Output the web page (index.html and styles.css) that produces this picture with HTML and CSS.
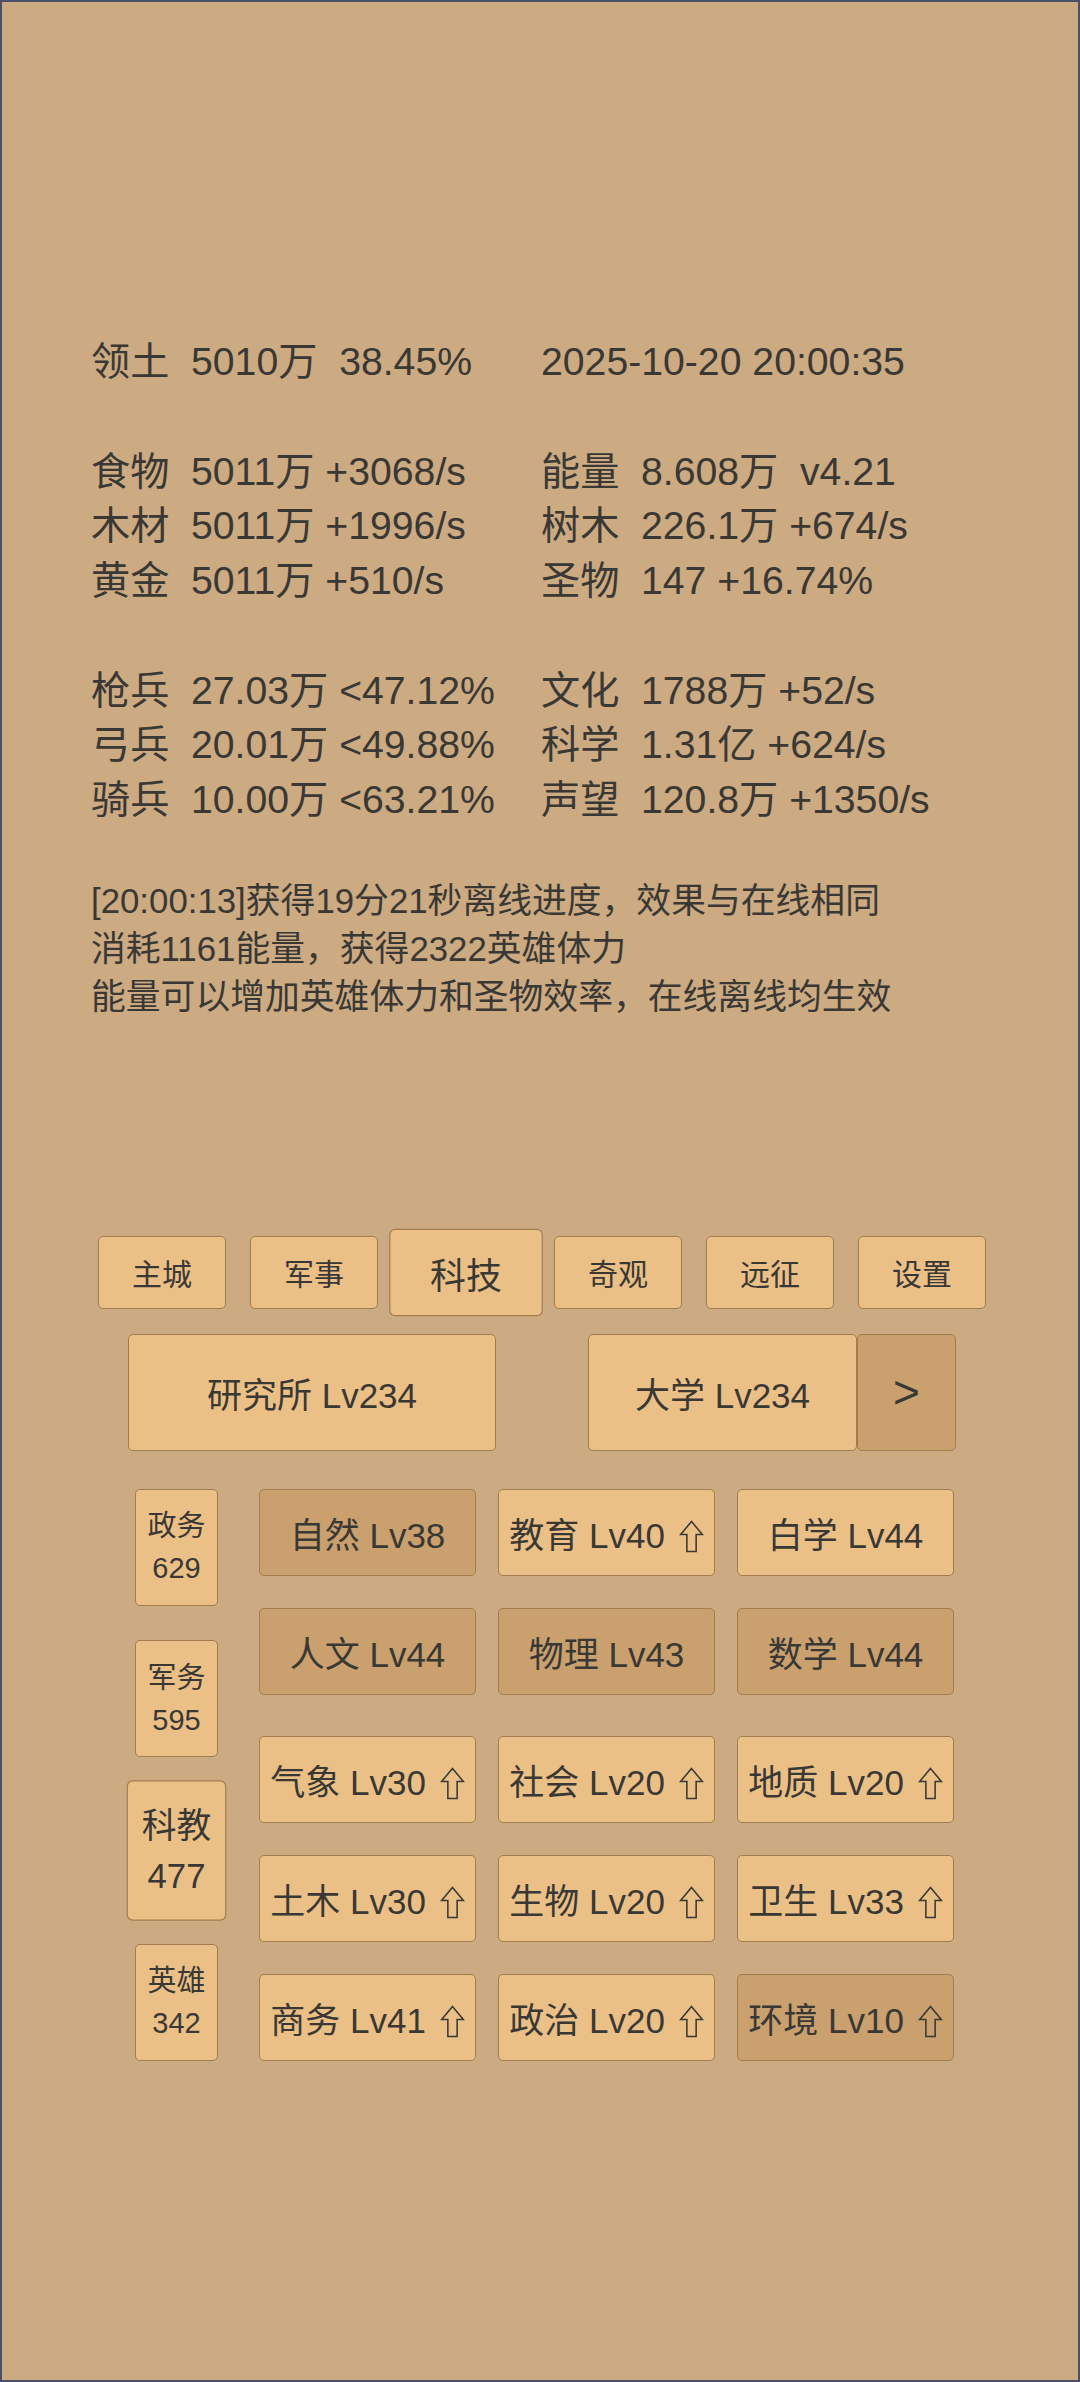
FILE: index.html
```html
<!DOCTYPE html>
<html lang="zh">
<head>
<meta charset="utf-8">
<title>科技</title>
<link rel="stylesheet" href="styles.css">
</head>
<body>
<div class="page">
  <div class="stats">
    <div class="row"><div class="cell"><span class="k">领土</span><span class="v">5010万  38.45%</span></div><div class="cell"><span class="v">2025-10-20 20:00:35</span></div></div>
    <div class="row blank"></div>
    <div class="row"><div class="cell"><span class="k">食物</span><span class="v">5011万 +3068/s</span></div><div class="cell"><span class="k">能量</span><span class="v">8.608万  v4.21</span></div></div>
    <div class="row"><div class="cell"><span class="k">木材</span><span class="v">5011万 +1996/s</span></div><div class="cell"><span class="k">树木</span><span class="v">226.1万 +674/s</span></div></div>
    <div class="row"><div class="cell"><span class="k">黄金</span><span class="v">5011万 +510/s</span></div><div class="cell"><span class="k">圣物</span><span class="v">147 +16.74%</span></div></div>
    <div class="row blank"></div>
    <div class="row"><div class="cell"><span class="k">枪兵</span><span class="v">27.03万 &lt;47.12%</span></div><div class="cell"><span class="k">文化</span><span class="v">1788万 +52/s</span></div></div>
    <div class="row"><div class="cell"><span class="k">弓兵</span><span class="v">20.01万 &lt;49.88%</span></div><div class="cell"><span class="k">科学</span><span class="v">1.31亿 +624/s</span></div></div>
    <div class="row"><div class="cell"><span class="k">骑兵</span><span class="v">10.00万 &lt;63.21%</span></div><div class="cell"><span class="k">声望</span><span class="v">120.8万 +1350/s</span></div></div>
  </div>

  <div class="log">
    <p>[20:00:13]获得19分21秒离线进度，效果与在线相同</p>
    <p>消耗1161能量，获得2322英雄体力</p>
    <p>能量可以增加英雄体力和圣物效率，在线离线均生效</p>
  </div>

  <nav class="tabs">
    <button class="tab">主城</button>
    <button class="tab">军事</button>
    <button class="tab active">科技</button>
    <button class="tab">奇观</button>
    <button class="tab">远征</button>
    <button class="tab">设置</button>
  </nav>

  <div class="buildings">
    <button class="bld wide">研究所 Lv234</button>
    <div class="bld-group">
      <button class="bld uni">大学 Lv234</button>
      <button class="bld next dark">&gt;</button>
    </div>
  </div>

  <div class="tech">
    <div class="side">
      <button class="sbtn">政务<br>629</button>
      <button class="sbtn">军务<br>595</button>
      <button class="sbtn active">科教<br>477</button>
      <button class="sbtn">英雄<br>342</button>
    </div>
    <div class="grid-wrap">
      <div class="grid">
        <button class="cellbtn dark">自然 Lv38</button>
        <button class="cellbtn">教育 Lv40 <svg class="up" viewBox="0 0 24 32"><path d="M12 1.5 L22.5 14 L16.5 14 L16.5 30.5 L7.5 30.5 L7.5 14 L1.5 14 Z"/></svg></button>
        <button class="cellbtn">白学 Lv44</button>
        <button class="cellbtn dark">人文 Lv44</button>
        <button class="cellbtn dark">物理 Lv43</button>
        <button class="cellbtn dark">数学 Lv44</button>
      </div>
      <div class="grid">
        <button class="cellbtn">气象 Lv30 <svg class="up" viewBox="0 0 24 32"><path d="M12 1.5 L22.5 14 L16.5 14 L16.5 30.5 L7.5 30.5 L7.5 14 L1.5 14 Z"/></svg></button>
        <button class="cellbtn">社会 Lv20 <svg class="up" viewBox="0 0 24 32"><path d="M12 1.5 L22.5 14 L16.5 14 L16.5 30.5 L7.5 30.5 L7.5 14 L1.5 14 Z"/></svg></button>
        <button class="cellbtn">地质 Lv20 <svg class="up" viewBox="0 0 24 32"><path d="M12 1.5 L22.5 14 L16.5 14 L16.5 30.5 L7.5 30.5 L7.5 14 L1.5 14 Z"/></svg></button>
        <button class="cellbtn">土木 Lv30 <svg class="up" viewBox="0 0 24 32"><path d="M12 1.5 L22.5 14 L16.5 14 L16.5 30.5 L7.5 30.5 L7.5 14 L1.5 14 Z"/></svg></button>
        <button class="cellbtn">生物 Lv20 <svg class="up" viewBox="0 0 24 32"><path d="M12 1.5 L22.5 14 L16.5 14 L16.5 30.5 L7.5 30.5 L7.5 14 L1.5 14 Z"/></svg></button>
        <button class="cellbtn">卫生 Lv33 <svg class="up" viewBox="0 0 24 32"><path d="M12 1.5 L22.5 14 L16.5 14 L16.5 30.5 L7.5 30.5 L7.5 14 L1.5 14 Z"/></svg></button>
        <button class="cellbtn">商务 Lv41 <svg class="up" viewBox="0 0 24 32"><path d="M12 1.5 L22.5 14 L16.5 14 L16.5 30.5 L7.5 30.5 L7.5 14 L1.5 14 Z"/></svg></button>
        <button class="cellbtn">政治 Lv20 <svg class="up" viewBox="0 0 24 32"><path d="M12 1.5 L22.5 14 L16.5 14 L16.5 30.5 L7.5 30.5 L7.5 14 L1.5 14 Z"/></svg></button>
        <button class="cellbtn dark">环境 Lv10 <svg class="up" viewBox="0 0 24 32"><path d="M12 1.5 L22.5 14 L16.5 14 L16.5 30.5 L7.5 30.5 L7.5 14 L1.5 14 Z"/></svg></button>
      </div>
    </div>
  </div>
</div>
</body>
</html>
```
FILE: styles.css
```css
* { box-sizing: border-box; }
html, body { margin: 0; padding: 0; }
body {
  font-family: "Liberation Sans", "Noto Sans CJK SC", sans-serif;
  color: #3a3834;
}
.page {
  width: 1080px;
  height: 2382px;
  border: 2px solid #4b5068;
  background: #ccaa82;
  padding: 333px 0 0 89px;
  overflow: hidden;
}
.stats {
  font-size: 39.2px;
  line-height: 54.75px;
}
.row {
  display: grid;
  grid-template-columns: 450px 1fr;
  height: 54.75px;
}
.cell { white-space: pre; }
.k { display: inline-block; width: 100px; }

.log {
  margin-top: 49px;
  font-size: 34.8px;
  line-height: 48px;
}
.log p { margin: 0; }

button {
  font-family: "Liberation Sans", "Noto Sans CJK SC", sans-serif;
  color: #3a3834;
  background: #ebc087;
  border: 1.5px solid #a27e4e;
  border-radius: 5px;
  padding: 0;
  margin: 0;
}
button.dark { background: #c9a06e; }

.tabs {
  margin: 215px 0 0 7px;
  display: flex;
  gap: 24px;
  align-items: center;
  height: 73px;
}
.tab {
  width: 128px;
  height: 73px;
  font-size: 30px;
}
.tab.active { transform: scale(1.2); }

.buildings {
  margin: 25px 0 0 37px;
  display: flex;
  gap: 92px;
  height: 117px;
}
.bld {
  height: 117px;
  font-size: 35px;
}
.bld.wide { width: 368px; }
.bld-group { display: flex; }
.bld.uni { width: 269px; }
.bld.next { width: 99px; font-size: 46px; }

.tech {
  margin: 38px 0 0 44px;
  display: flex;
  gap: 41px;
  height: 572px;
}
.side {
  width: 83px;
  display: flex;
  flex-direction: column;
  justify-content: space-between;
}
.sbtn {
  width: 83px;
  height: 117px;
  font-size: 29px;
  line-height: 42px;
}
.sbtn.active { transform: scale(1.2); }
.grid-wrap {
  display: flex;
  flex-direction: column;
  gap: 41px;
}
.grid {
  display: grid;
  grid-template-columns: repeat(3, 217px);
  grid-auto-rows: 87px;
  column-gap: 22px;
  row-gap: 32px;
}
.cellbtn { font-size: 35px; }
.up {
  width: 25px;
  height: 33px;
  margin-left: 4px;
  vertical-align: -5px;
  fill: none;
  stroke: #3a3834;
  stroke-width: 1.5;
  stroke-linejoin: miter;
}
```
